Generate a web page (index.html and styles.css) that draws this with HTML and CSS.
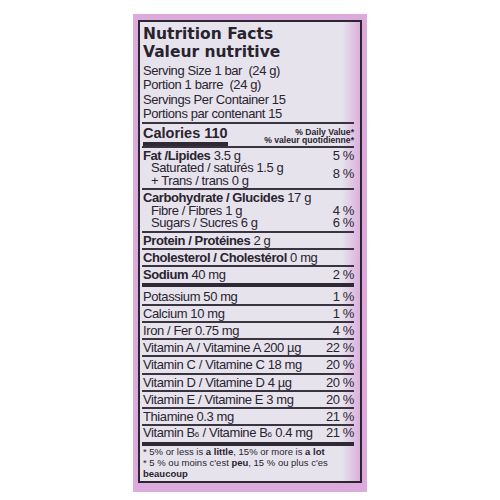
FILE: index.html
```html
<!DOCTYPE html>
<html lang="en">
<head>
    <meta charset="UTF-8">
    <meta name="viewport" content="width=device-width, initial-scale=1.0">
    <title>Nutrition Facts</title>
    <link rel="stylesheet" href="styles.css">
</head>
<body>
    <div class="label">
        <div class="box">
            <h1 class="title">Nutrition Facts<br>Valeur nutritive</h1>

            <div class="serving">
                Serving Size 1 bar&nbsp; (24 g)<br>
                Portion 1 barre&nbsp; (24 g)<br>
                Servings Per Container 15<br>
                Portions par contenant 15
            </div>

            <div class="calories">
                <div class="cal-left">
                    <div class="cal-text">Calories 110</div>
                    <div class="cal-bar"></div>
                </div>
                <div class="dv">% Daily Value*<br>% valeur quotidienne*</div>
            </div>

            <div class="group">
                <div class="line"><span><b>Fat /Lipides</b> 3.5 g</span><span>5 %</span></div>
                <div class="pair">
                    <div class="indent">Saturated / saturés 1.5 g<br>+ Trans / trans 0 g</div>
                    <span>8 %</span>
                </div>
            </div>

            <div class="group">
                <div class="line"><span><b>Carbohydrate / Glucides</b> 17 g</span></div>
                <div class="line"><span class="indent">Fibre / Fibres 1 g</span><span>4 %</span></div>
                <div class="line"><span class="indent">Sugars / Sucres 6 g</span><span>6 %</span></div>
            </div>

            <div class="row"><span><b>Protein / Protéines</b> 2 g</span></div>
            <div class="row"><span><b>Cholesterol / Cholestérol</b> 0 mg</span></div>
            <div class="row sodium"><span><b>Sodium</b> 40 mg</span><span>2 %</span></div>

            <div class="row vit first"><span>Potassium 50 mg</span><span>1 %</span></div>
            <div class="row vit"><span>Calcium 10 mg</span><span>1 %</span></div>
            <div class="row vit"><span>Iron / Fer 0.75 mg</span><span>4 %</span></div>
            <div class="row vit"><span>Vitamin A / Vitamine A 200 µg</span><span>22 %</span></div>
            <div class="row vit"><span>Vitamin C / Vitamine C 18 mg</span><span>20 %</span></div>
            <div class="row vit"><span>Vitamin D / Vitamine D 4 µg</span><span>20 %</span></div>
            <div class="row vit"><span>Vitamin E / Vitamine E 3 mg</span><span>20 %</span></div>
            <div class="row vit"><span>Thiamine 0.3 mg</span><span>21 %</span></div>
            <div class="row vit last"><span>Vitamin B<small class="sub">6</small> / Vitamine B<small class="sub">6</small> 0.4 mg</span><span>21 %</span></div>

            <div class="foot">
                * 5% or less is <b>a little</b>, 15% or more is <b>a lot</b><br>
                * 5 % ou moins c'est <b>peu</b>, 15 % ou plus c'es<br>
                <b>beaucoup</b>
            </div>
        </div>
    </div>
</body>
</html>
```

FILE: styles.css
```css
body {
    margin: 0;
    background-color: #ffffff;
    font-family: 'Liberation Sans', Arial, sans-serif;
    color: #2a2430;
}
.label {
    width: 234px;
    margin: 14px auto 0;
    padding: 6px 5px 9px;
    box-sizing: border-box;
    background-color: #dcaadc;
}
.box {
    border: 2px solid #2b2630;
    padding: 3px 6px 1px 2px;
    background: linear-gradient(to right, #e6e3ec 0, #e6e3ec calc(100% - 18px), #dcb0de 100%);
}
.title {
    margin: 0;
    padding-left: 1px;
    font-family: 'DejaVu Sans', sans-serif;
    font-size: 15.5px;
    font-weight: bold;
    line-height: 18px;
    color: #29232e;
}
.serving {
    margin-top: 3px;
    padding-left: 1px;
    font-size: 13px;
    line-height: 14.4px;
    letter-spacing: -0.4px;
    border-bottom: 2px solid #3a3440;
}
.calories {
    display: flex;
    justify-content: space-between;
    align-items: flex-start;
    border-bottom: 2px solid #3a3440;
}
.cal-left {
    display: inline-block;
    padding-left: 1px;
}
.cal-text {
    font-size: 14.5px;
    font-weight: bold;
    line-height: 18px;
}
.cal-bar {
    height: 4px;
    background-color: #2e2934;
}
.dv {
    padding-top: 4px;
    font-size: 8.6px;
    font-weight: bold;
    line-height: 8.5px;
    text-align: right;
}
.group {
    padding: 2px 0 1px 1px;
    font-size: 13px;
    line-height: 12.5px;
    letter-spacing: -0.4px;
    border-bottom: 2px solid #3a3440;
}
.line {
    display: flex;
    justify-content: space-between;
}
.pair {
    display: flex;
    justify-content: space-between;
    align-items: center;
}
.indent {
    padding-left: 8px;
}
.row {
    display: flex;
    justify-content: space-between;
    padding-left: 1px;
    font-size: 13px;
    line-height: 15px;
    letter-spacing: -0.4px;
    border-bottom: 2px solid #3a3440;
}
.row.sodium {
    line-height: 16px;
    border-bottom: 4px solid #2e2934;
}
.row.vit {
    line-height: 15.2px;
}
.row.first {
    padding-top: 2px;
}
.row.last {
    line-height: 14px;
    border-bottom: 4px solid #2e2934;
}
.sub {
    font-size: 8px;
    letter-spacing: 0;
}
.foot {
    padding: 0 0 1px 1px;
    font-size: 9.5px;
    line-height: 11px;
}
```
